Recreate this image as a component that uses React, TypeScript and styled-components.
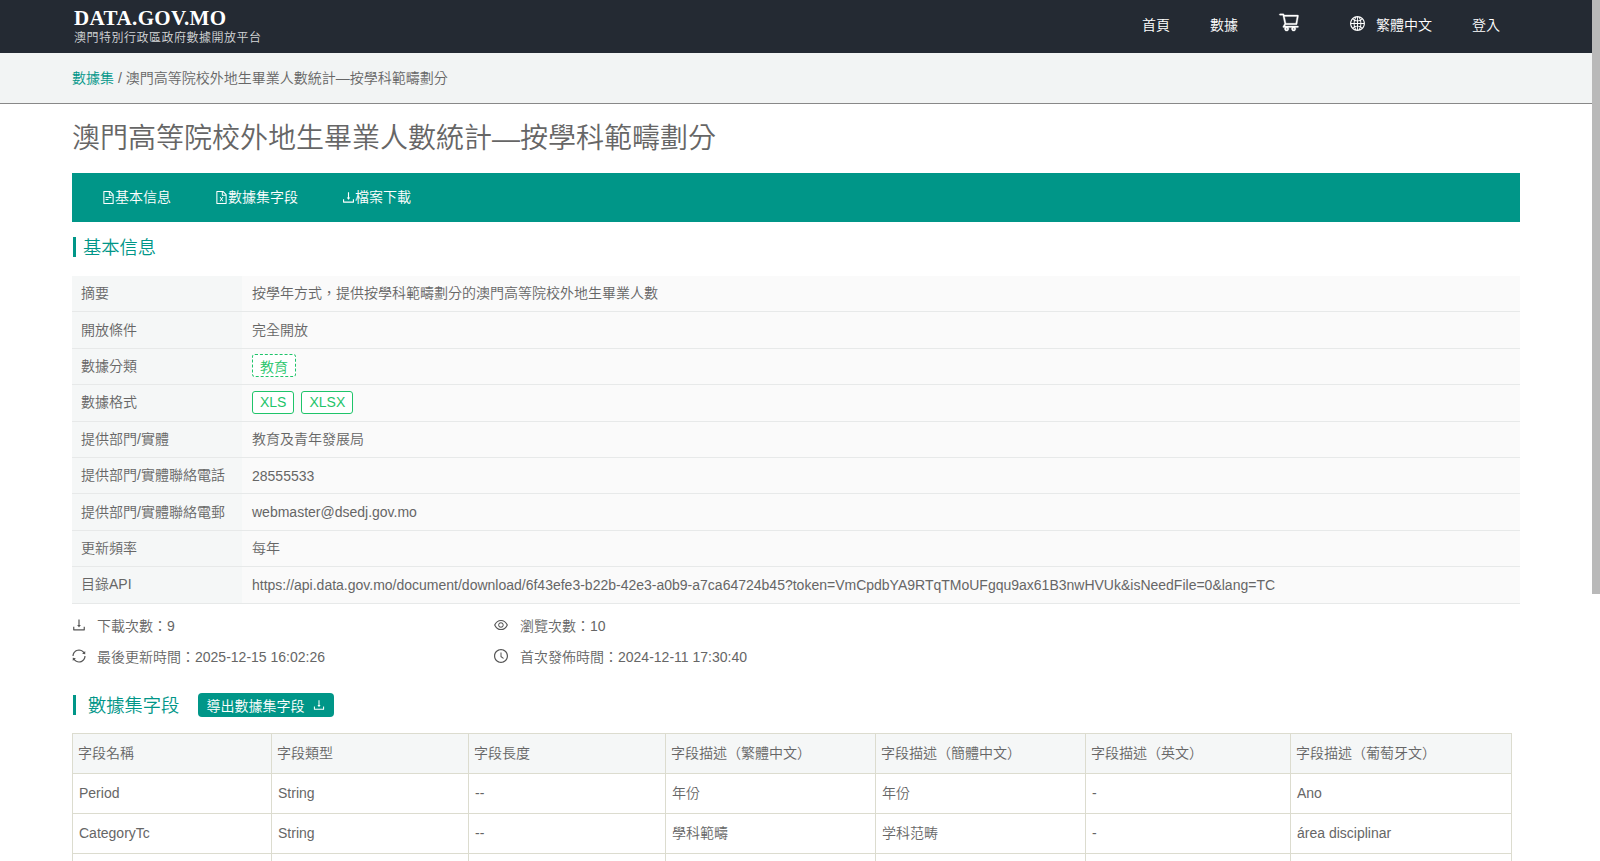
import styled, { createGlobalStyle } from "styled-components";
import {
  AiOutlineClockCircle,
  AiOutlineDownload,
  AiOutlineEye,
  AiOutlineFileExcel,
  AiOutlineFileText,
  AiOutlineGlobal,
  AiOutlineShoppingCart,
  AiOutlineSync,
} from "react-icons/ai";

const GlobalStyle = createGlobalStyle`
  body {
    margin: 0;
    background: #fff;
    color: #666;
    font-family: "Liberation Sans", "Noto Sans CJK TC DemiLight", "Noto Sans CJK TC Light", "Noto Sans CJK TC", sans-serif;
    font-size: 14px;
  }
`;

const Page = styled.div`
  width: 1592px;
`;

const ScrollThumb = styled.div`
  position: fixed;
  top: 0;
  right: 0;
  width: 8px;
  height: 594px;
  background: #b9b9b9;
`;

const Header = styled.header`
  height: 53px;
  background: #242a33;
  display: flex;
  align-items: center;
  justify-content: space-between;
  padding: 0 73px 0 74px;
`;

const Logo = styled.div`
  display: flex;
  flex-direction: column;
  color: #fff;
  padding-top: 3px;
`;

const LogoTitle = styled.div`
  font-family: "Liberation Serif", serif;
  font-weight: 700;
  font-size: 21px;
  line-height: 21px;
  letter-spacing: 0.4px;
`;

const LogoSub = styled.div`
  font-size: 12px;
  line-height: 19px;
  letter-spacing: 0.5px;
  color: #d4d6d8;
`;

const Nav = styled.nav`
  display: flex;
  align-items: center;
  color: #fff;
  font-size: 14px;
  height: 100%;
`;

const NavItem = styled.a<{ $width: number }>`
  display: flex;
  align-items: center;
  width: ${(p) => p.$width}px;
  padding-bottom: 6px;
`;

const CartLink = styled.a`
  display: flex;
  width: 71px;
  margin-bottom: 9px;
  font-size: 22px;

  svg {
    stroke: #fff;
    stroke-width: 14px;
  }
`;

const GlobeIcon = styled(AiOutlineGlobal)`
  font-size: 17px;
  margin-right: 10px;
`;

const Crumbs = styled.div`
  height: 48px;
  background: #f2f4f4;
  border-bottom: 1px solid #888;
  padding: 0 0 2px 72px;
  display: flex;
  align-items: center;
`;

const CrumbLink = styled.a`
  color: #009688;
  margin-right: 4px;
`;

const Main = styled.main`
  width: 1448px;
  margin-left: 72px;
  padding-bottom: 150px;
`;

const Title = styled.h1`
  margin: 0;
  height: 63px;
  padding-bottom: 6px;
  display: flex;
  align-items: center;
  font-size: 28px;
  font-weight: 400;
`;

const TabBar = styled.div`
  height: 45px;
  padding: 0 0 4px 29px;
  background: #009688;
  display: flex;
  align-items: center;
  gap: 29px;
  color: #fff;
`;

const Tab = styled.a`
  display: flex;
  align-items: center;
  padding-right: 14px;

  svg {
    font-size: 15px;
    margin: 4px -1px 0 0;
  }
`;

const SectionHead = styled.div<{ $top: number }>`
  display: flex;
  align-items: center;
  height: 20px;
  border-left: 3px solid #009688;
  margin: ${(p) => p.$top}px 0 0 1px;
  color: #009688;
  font-size: 18.3px;
`;

const SectionTitle = styled.span<{ $gap: number }>`
  padding: 0 0 2px ${(p) => p.$gap}px;
`;

const InfoTable = styled.div`
  margin-top: 19px;
`;

const InfoRow = styled.div<{ $height: number }>`
  display: grid;
  grid-template-columns: 170px 1fr;
  height: ${(p) => p.$height}px;
  border-bottom: 1px solid #e7e9e9;
  box-sizing: border-box;
`;

const InfoLabel = styled.div<{ $lift: number }>`
  background: #f5f7f7;
  padding: 0 0 ${(p) => p.$lift}px 9px;
  display: flex;
  align-items: center;
`;

const InfoValue = styled.div<{ $lift: number }>`
  background: #fafafa;
  padding: 0 0 ${(p) => p.$lift}px 10px;
  display: flex;
  align-items: center;
  gap: 7px;
`;

const Tag = styled.span<{ $dashed?: boolean }>`
  display: inline-flex;
  align-items: center;
  box-sizing: border-box;
  height: 23px;
  padding: 0 7px;
  border: 1px ${(p) => (p.$dashed ? "dashed" : "solid")} #1fc46a;
  border-radius: 3px;
  color: #1fc46a;
  background: #fff;
`;

const Stats = styled.div`
  display: grid;
  grid-template-columns: 423px 1fr;
  grid-auto-rows: 31px;
  margin-top: 5px;
`;

const Stat = styled.div`
  display: flex;
  align-items: center;
  gap: 10px;

  svg {
    font-size: 16px;
    margin-left: -1px;
    color: #555;
  }

  &:nth-child(even) svg {
    margin-left: -2px;
    margin-right: 1px;
  }
`;

const FieldsHead = styled.div`
  display: flex;
  align-items: center;
  margin-top: 22px;
`;

const ExportButton = styled.a`
  display: flex;
  align-items: center;
  height: 24px;
  margin-left: 19px;
  padding: 0 8px;
  gap: 8px;
  background: #009688;
  border-radius: 4px;
  color: #fff;
  font-size: 14px;
`;

const FieldTable = styled.table`
  width: 1439px;
  margin-top: 16px;
  border-collapse: collapse;
  table-layout: fixed;
`;

const Th = styled.th`
  height: 40px;
  padding: 0 6px 4px 5px;
  box-sizing: border-box;
  border: 1px solid #dcdccf;
  background: #f5f7f7;
  font-weight: 400;
  text-align: left;
`;

const Td = styled.td<{ $cjk: boolean }>`
  height: 40px;
  padding: 0 6px ${(p) => (p.$cjk ? 4 : 2)}px 6px;
  box-sizing: border-box;
  border: 1px solid #dcdccf;
`;

const hasCjk = (text: string) => /[^\x00-\xff]/.test(text);

const infoRows: { label: string; value: string; height: number; lift: number; valueLift: number }[] = [
  { label: "摘要", value: "按學年方式，提供按學科範疇劃分的澳門高等院校外地生畢業人數", height: 36, lift: 4, valueLift: 4 },
  { label: "開放條件", value: "完全開放", height: 37, lift: 2, valueLift: 2 },
  { label: "數據分類", value: "", height: 36, lift: 4, valueLift: 2 },
  { label: "數據格式", value: "", height: 37, lift: 4, valueLift: 2 },
  { label: "提供部門/實體", value: "教育及青年發展局", height: 36, lift: 4, valueLift: 4 },
  { label: "提供部門/實體聯絡電話", value: "28555533", height: 36, lift: 4, valueLift: 0 },
  { label: "提供部門/實體聯絡電郵", value: "webmaster@dsedj.gov.mo", height: 37, lift: 2, valueLift: 0 },
  { label: "更新頻率", value: "每年", height: 36, lift: 4, valueLift: 4 },
  {
    label: "目錄API",
    value:
      "https://api.data.gov.mo/document/download/6f43efe3-b22b-42e3-a0b9-a7ca64724b45?token=VmCpdbYA9RTqTMoUFgqu9ax61B3nwHVUk&isNeedFile=0&lang=TC",
    height: 37,
    lift: 4,
    valueLift: 1,
  },
];

const columns = [
  { name: "字段名稱", width: 199 },
  { name: "字段類型", width: 197 },
  { name: "字段長度", width: 197 },
  { name: "字段描述（繁體中文）", width: 210 },
  { name: "字段描述（簡體中文）", width: 210 },
  { name: "字段描述（英文）", width: 205 },
  { name: "字段描述（葡萄牙文）", width: 221 },
];

const fields = [
  ["Period", "String", "--", "年份", "年份", "-", "Ano"],
  ["CategoryTc", "String", "--", "學科範疇", "学科范畴", "-", "área disciplinar"],
  ["CategorySc", "String", "--", "學科範疇", "学科范畴", "-", "área disciplinar"],
];

export default function App() {
  return (
    <Page>
      <GlobalStyle />
      <ScrollThumb />
      <Header>
        <Logo>
          <LogoTitle>DATA.GOV.MO</LogoTitle>
          <LogoSub>澳門特別行政區政府數據開放平台</LogoSub>
        </Logo>
        <Nav>
          <NavItem $width={68}>首頁</NavItem>
          <NavItem $width={68}>數據</NavItem>
          <CartLink>
            <AiOutlineShoppingCart />
          </CartLink>
          <NavItem $width={123}>
            <GlobeIcon />
            繁體中文
          </NavItem>
          <NavItem $width={47}>登入</NavItem>
        </Nav>
      </Header>
      <Crumbs>
        <CrumbLink>數據集</CrumbLink>/ 澳門高等院校外地生畢業人數統計—按學科範疇劃分
      </Crumbs>
      <Main>
        <Title>澳門高等院校外地生畢業人數統計—按學科範疇劃分</Title>
        <TabBar>
          <Tab>
            <AiOutlineFileText />
            基本信息
          </Tab>
          <Tab>
            <AiOutlineFileExcel />
            數據集字段
          </Tab>
          <Tab>
            <AiOutlineDownload />
            檔案下載
          </Tab>
        </TabBar>
        <SectionHead $top={15}>
          <SectionTitle $gap={7}>基本信息</SectionTitle>
        </SectionHead>
        <InfoTable>
          {infoRows.map((row) => (
            <InfoRow key={row.label} $height={row.height}>
              <InfoLabel $lift={row.lift}>{row.label}</InfoLabel>
              <InfoValue $lift={row.valueLift}>
                {row.label === "數據分類" && <Tag $dashed>教育</Tag>}
                {row.label === "數據格式" && (
                  <>
                    <Tag>XLS</Tag>
                    <Tag>XLSX</Tag>
                  </>
                )}
                {row.value}
              </InfoValue>
            </InfoRow>
          ))}
        </InfoTable>
        <Stats>
          <Stat>
            <AiOutlineDownload />
            下載次數：9
          </Stat>
          <Stat>
            <AiOutlineEye />
            瀏覽次數：10
          </Stat>
          <Stat>
            <AiOutlineSync />
            最後更新時間：2025-12-15 16:02:26
          </Stat>
          <Stat>
            <AiOutlineClockCircle />
            首次發佈時間：2024-12-11 17:30:40
          </Stat>
        </Stats>
        <FieldsHead>
          <SectionHead $top={0}>
            <SectionTitle $gap={12}>數據集字段</SectionTitle>
          </SectionHead>
          <ExportButton>
            導出數據集字段
            <AiOutlineDownload />
          </ExportButton>
        </FieldsHead>
        <FieldTable>
          <colgroup>
            {columns.map((c) => (
              <col key={c.name} width={c.width} />
            ))}
          </colgroup>
          <thead>
            <tr>
              {columns.map((c) => (
                <Th key={c.name}>{c.name}</Th>
              ))}
            </tr>
          </thead>
          <tbody>
            {fields.map((row) => (
              <tr key={row[0]}>
                {row.map((cell, i) => (
                  <Td key={i} $cjk={hasCjk(cell)}>
                    {cell}
                  </Td>
                ))}
              </tr>
            ))}
          </tbody>
        </FieldTable>
      </Main>
    </Page>
  );
}
